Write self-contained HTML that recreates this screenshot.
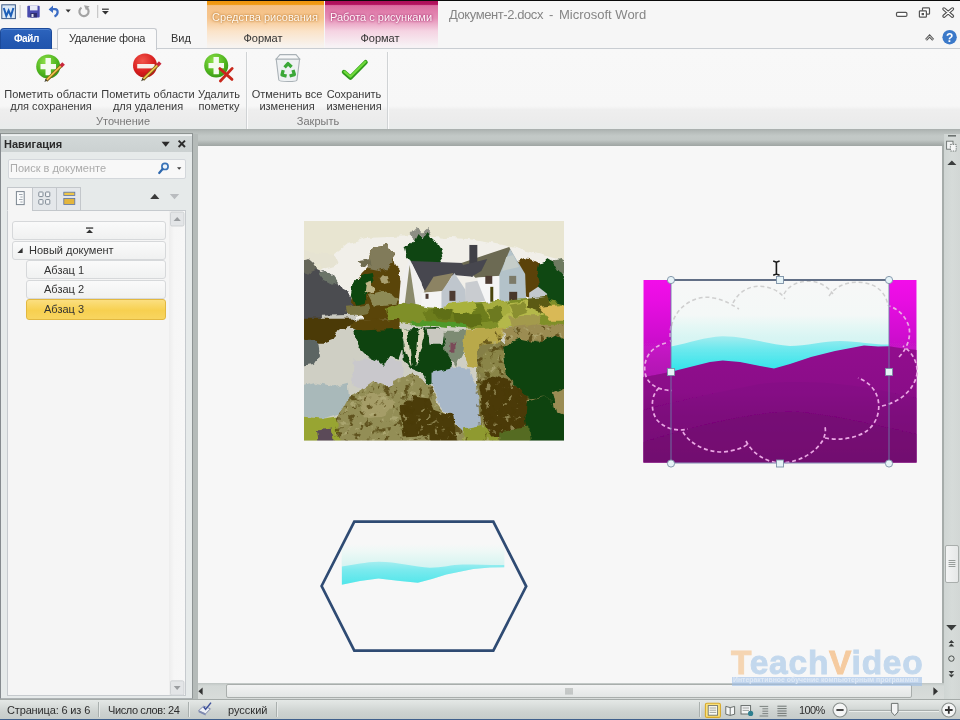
<!DOCTYPE html>
<html lang="ru">
<head>
<meta charset="utf-8">
<title>Документ-2.docx - Microsoft Word</title>
<style>
*{box-sizing:border-box;margin:0;padding:0}
html,body{width:960px;height:720px;overflow:hidden}
body{position:relative;background:#c6cacf;font-family:"Liberation Sans","DejaVu Sans",sans-serif;font-size:11px;color:#3a3a3a}
.abs{position:absolute}
.t{position:absolute;white-space:nowrap;line-height:1;will-change:transform}
.c{text-align:center;transform:translateX(-50%)}
/* title */
#topline{left:0;top:0;width:960px;height:1.4px;background:#0a0a0a}
#title{left:0;top:1px;width:960px;height:28px;background:#f6f6f6}
#tabsrow{left:0;top:29px;width:960px;height:20px;background:#f6f6f6;border-bottom:1px solid #c9cdd2}
#ribbon{left:0;top:49px;width:960px;height:81px;background:linear-gradient(#f8f8f8 0,#f7f7f7 57px,#eeeeee 61px,#ececec 70px,#e8eceb 100%)}
#filetab{left:0;top:27.5px;width:52px;height:21px;background:linear-gradient(#2d64bd,#2459b2 60%,#2155ad);border:1px solid #1c4a9a;border-bottom:none;box-shadow:inset 0 1px 0 #4f82d0;border-radius:4px 4px 0 0;color:#fff}
#acttab{left:57px;top:28px;width:100px;height:22px;background:#f9f9f9;border:1px solid #c6cacf;border-bottom:none;border-radius:3px 3px 0 0}
#ctx1{left:206.5px;top:1px;width:117px;height:47px;background:linear-gradient(#ef960f 0,#f09a14 3.4px,#f5c186 4.6px,#f6c58e 17px,#fbe3c8 30px,#f7f3ef 45px)}
#ctx2{left:325px;top:1px;width:112.5px;height:47px;background:linear-gradient(#ad0f5a 0,#b3125e 3.4px,#dc6ea2 4.6px,#e48db5 17px,#f5d3e2 30px,#f7f2f5 45px)}
.sep{position:absolute;width:1px;background:#d0d3d5;top:52px;height:77px;box-shadow:1px 0 0 #fbfbfb}
/* nav */
#nav{left:0;top:133px;width:193px;height:566px;background:#e6eaea;border:1px solid #8e9492;border-bottom-color:#aeb3b5;border-right-color:#8e9494;border-left:1px solid #858a8e}
#navhead{left:1px;top:134.5px;width:191px;height:17px;background:linear-gradient(#eef1f1 0,#eef1f1 1px,#d2d8d8 1.5px,#cbd1d1 100%)}
#navbody{left:7px;top:210px;width:179px;height:486px;background:#f5f5f5;border:1px solid #c6cace}
#navscroll{left:169px;top:211px;width:16px;height:484px;background:linear-gradient(90deg,#ededed 0,#f6f6f6 5px,#f7f7f7 100%)}
#search{left:8px;top:159px;width:178px;height:20px;background:#f8f8f8;border:1px solid #d3d7db;border-radius:2px}
.ntab{position:absolute;top:187px;height:24px;width:25px;background:#e4e7ea;border:1px solid #c3c7cb}
.item{position:absolute;height:19px;background:linear-gradient(#fafafa,#f0f1f1);border:1px solid #d6d8da;border-radius:3px}
/* doc */
#wstop{left:0;top:129px;width:960px;height:17px;background:linear-gradient(#a9afad 0,#b6bcba 3px,#c3c9c7 7px,#c1c7c5 11px,#aeb4b2 14px,#9fa5a3 17px)}
#wsleft{left:192px;top:134px;width:6px;height:565px;background:#b5bbb9}
#page{left:198px;top:146px;width:744px;height:537px;background:#f7f7f7}
#pager{left:942px;top:146px;width:2px;height:537px;background:#a6acaa}
#vscroll{left:944px;top:134px;width:16px;height:565px;background:linear-gradient(90deg,#cfd5d3,#d6dbd9 50%,#d2d7d5)}
#vthumb{left:944.5px;top:545px;width:14.5px;height:38px;background:linear-gradient(90deg,#f3f4f4,#e6e8e8);border:1px solid #a9aeac;border-radius:2px}
#hscroll{left:198px;top:683px;width:746px;height:16px;background:linear-gradient(#bfc5c3 0,#d3d8d6 3px,#d8dcda 100%)}
#hthumb{left:226px;top:684px;width:686px;height:14px;background:linear-gradient(#f2f3f3,#e3e6e5);border:1px solid #a9aeac;border-radius:2px}
#status{left:0;top:699px;width:960px;height:21px;background:linear-gradient(#e4e8e6 0,#dde1df 4px,#cdd2d0 60%,#c5cbc9);border-top:1px solid #a4aaa8}
#botline{left:0;top:718.8px;width:960px;height:1.2px;background:#3f5f8c}
.ssep{position:absolute;top:702px;height:15px;width:1px;background:#aab0ae;box-shadow:1px 0 0 #e6e9e8}
</style>
</head>
<body>
<div class="abs" id="title"></div>
<div class="abs" id="topline"></div>
<div class="abs" id="tabsrow"></div>
<div class="abs" id="ctx1"></div>
<div class="abs" id="ctx2"></div>
<div class="abs" id="ribbon"></div>
<div class="abs" id="filetab"></div>
<div class="abs" id="acttab"></div>

<div class="t" style="left:448.7px;top:8px;font-size:13px;letter-spacing:-0.42px;color:#858585">Документ-2.docx</div>
<div class="t" style="left:548.6px;top:8px;font-size:13px;color:#858585">-</div>
<div class="t" style="left:558.7px;top:8px;font-size:13px;color:#858585">Microsoft Word</div>
<div class="t" id="ftxt" style="left:13.8px;top:34.4px;font-size:10px;font-weight:bold;letter-spacing:-0.45px;color:#fff">Файл</div>
<div class="t" style="left:68.7px;top:33px;font-size:11px;letter-spacing:-0.3px;color:#333">Удаление фона</div>
<div class="t" style="left:171px;top:33px;font-size:11px;color:#333">Вид</div>
<div class="t c" style="left:265px;top:12px;font-size:11px;color:#fffaf2;text-shadow:0 0 2px #b9782e,0 0 3px #c98a44">Средства рисования</div>
<div class="t c" style="left:381px;top:12px;font-size:11px;color:#fff6fa;text-shadow:0 0 2px #a8306e,0 0 3px #b84a84">Работа с рисунками</div>
<div class="t c" style="left:263px;top:33px;font-size:11px;color:#333">Формат</div>
<div class="t c" style="left:380px;top:33px;font-size:11px;color:#333">Формат</div>

<div class="t c" style="left:51px;top:89px">Пометить области</div>
<div class="t c" style="left:51px;top:101px">для сохранения</div>
<div class="t c" style="left:148px;top:89px">Пометить области</div>
<div class="t c" style="left:148px;top:101px">для удаления</div>
<div class="t c" style="left:219px;top:89px">Удалить</div>
<div class="t c" style="left:219px;top:101px">пометку</div>
<div class="t c" style="left:287px;top:89px">Отменить все</div>
<div class="t c" style="left:287px;top:101px">изменения</div>
<div class="t c" style="left:354px;top:89px">Сохранить</div>
<div class="t c" style="left:354px;top:101px">изменения</div>
<div class="t c" style="left:123px;top:116px;color:#777">Уточнение</div>
<div class="t c" style="left:318px;top:116px;color:#777">Закрыть</div>
<div class="sep" style="left:246px"></div>
<div class="sep" style="left:387px"></div>

<svg class="abs" id="ribicons" style="left:0;top:0" width="960" height="133" viewBox="0 0 960 133">
<defs>
<radialGradient id="gr" cx="0.4" cy="0.3" r="0.8"><stop offset="0" stop-color="#8fe04a"/><stop offset="0.6" stop-color="#4fb51f"/><stop offset="1" stop-color="#2f8f14"/></radialGradient>
<radialGradient id="rd" cx="0.4" cy="0.3" r="0.8"><stop offset="0" stop-color="#f2554a"/><stop offset="0.6" stop-color="#d81f1f"/><stop offset="1" stop-color="#a81212"/></radialGradient>
<filter id="bi" x="-10%" y="-10%" width="120%" height="120%"><feGaussianBlur stdDeviation="0.45"/></filter>
</defs>
<g filter="url(#bi)">
<!-- word icon -->
<rect x="1.8" y="4.8" width="13.6" height="13.8" fill="#dbe9f7" stroke="#3c5a86" stroke-width="1"/>
<path d="M3.8 8 L6.3 15.8 L8.6 10.5 L10.9 15.8 L13.4 8" fill="none" stroke="#1f5fb8" stroke-width="2"/>
<rect x="19.6" y="5" width="1" height="13" fill="#c5c5c5"/>
<!-- save -->
<rect x="27.3" y="5.8" width="12.4" height="11.6" rx="1" fill="#4a4cae"/>
<rect x="30" y="5.8" width="7.5" height="4.6" fill="#e9ecf7"/>
<rect x="30.4" y="13" width="6.6" height="4.4" fill="#2d2f6e"/>
<rect x="31.5" y="14" width="2" height="3" fill="#e0e0ee"/>
<!-- undo -->
<path d="M50 9.2 L55 9.2 C58.6 9.4 58.6 14.5 54.5 16.4" fill="none" stroke="#3a6cc4" stroke-width="2.2"/>
<path d="M48.6 9.6 L53 5.6 L53 13 Z" fill="#3a6cc4"/>
<path d="M65.6 9.6 L70.8 9.6 L68.2 12.6 Z" fill="#333"/>
<!-- redo -->
<path d="M87 8 A4.6 4.6 0 1 1 81.5 7.6" fill="none" stroke="#a3a3a3" stroke-width="2.2"/>
<path d="M84 5.2 L89.6 6.2 L86 10.2 Z" fill="#a3a3a3"/>
<rect x="97.2" y="5" width="1" height="13" fill="#bdbdbd"/>
<rect x="102" y="8.6" width="6.8" height="1.2" fill="#333"/>
<path d="M102 11 L108.8 11 L105.4 14.6 Z" fill="#333"/>
<!-- window controls -->
<rect x="896.5" y="12.4" width="10.4" height="4" rx="1.2" fill="#fff" stroke="#555" stroke-width="1.2"/>
<rect x="922.5" y="7.8" width="7" height="6.4" rx="0.8" fill="#fff" stroke="#555" stroke-width="1.2"/>
<rect x="919.4" y="10.8" width="7" height="6.4" rx="0.8" fill="#fff" stroke="#555" stroke-width="1.2"/>
<rect x="921.6" y="13" width="2.4" height="2.2" fill="#555"/>
<path d="M944 9 L952.4 16.2 M952.4 9 L944 16.2" stroke="#505050" stroke-width="3.5" stroke-linecap="round"/>
<path d="M944 9 L952.4 16.2 M952.4 9 L944 16.2" stroke="#fff" stroke-width="1.2" stroke-linecap="round"/>
<path d="M926 39.8 L929.6 36 L933.2 39.8" fill="none" stroke="#555" stroke-width="2.6" stroke-linejoin="miter"/>
<path d="M926 39.8 L929.6 36 L933.2 39.8" fill="none" stroke="#fff" stroke-width="0.8"/>
<circle cx="949.6" cy="37.2" r="7.2" fill="#3b79c9"/>
<!-- icon 1 -->
<circle cx="48.2" cy="66.6" r="12" fill="url(#gr)"/>
<path d="M40.5 66.6 L56 66.6 M48.2 58 L48.2 75.2" stroke="#f4fbef" stroke-width="5.4"/>
<path d="M46.2 80.6 L61.6 65.4" stroke="#7a5a14" stroke-width="3.4"/>
<path d="M46.4 80.2 L61.2 65.6" stroke="#eec24a" stroke-width="1.8"/>
<path d="M60.8 66.2 L63.6 63.4" stroke="#c8283a" stroke-width="3.6"/>
<path d="M44.4 82 L47.6 80.6 L45.8 78.8 Z" fill="#443"/>
<!-- icon 2 -->
<circle cx="145" cy="65.6" r="12" fill="url(#rd)"/>
<path d="M137.2 66.2 L154.6 66.2" stroke="#f8efe9" stroke-width="4.4"/>
<path d="M143 79.6 L158.2 64.6" stroke="#7a5a14" stroke-width="3.4"/>
<path d="M143.2 79.2 L157.8 64.8" stroke="#eec24a" stroke-width="1.8"/>
<path d="M157.4 65.4 L160.2 62.6" stroke="#c8283a" stroke-width="3.6"/>
<path d="M141 81.2 L144.4 79.8 L142.6 78 Z" fill="#443"/>
<!-- icon 3 -->
<circle cx="216.2" cy="65.6" r="12" fill="url(#gr)"/>
<path d="M208.5 65.6 L224 65.6 M216.2 57 L216.2 74.2" stroke="#f4fbef" stroke-width="5.4"/>
<path d="M219.8 68.6 L232 79.4 M232.2 68.4 L220.4 81" stroke="#c8281c" stroke-width="2.8" stroke-linecap="round"/>
<!-- recycle bin -->
<path d="M276.2 59 L299.6 59 L297 80 C297 82 279 82 278.8 80 Z" fill="#eef1f3" stroke="#a9b1b6" stroke-width="1.1"/>
<path d="M276.2 59 L280 54.6 L296 54.6 L299.6 59 Z" fill="#f7f8f9" stroke="#a9b1b6" stroke-width="1.1"/>
<g fill="none" stroke="#3aa838" stroke-width="3.3" stroke-linejoin="round"><path d="M284.6 67.4 L288 63.6 L291.6 67"/><path d="M293 70 L294.4 74.6 L289.6 76"/><path d="M286.6 76.2 L282 75 L283.2 70.2"/></g>
<!-- checkmark -->
<path d="M344 72 L350.4 77.6 L365.6 62.2" fill="none" stroke="#2f9a1c" stroke-width="4.4" stroke-linecap="round" stroke-linejoin="round"/>
<path d="M344.4 71.6 L350.4 76.6 L365.4 61.8" fill="none" stroke="#6fda3a" stroke-width="2.2" stroke-linecap="round" stroke-linejoin="round"/>
</g>
<text x="949.6" y="41.6" text-anchor="middle" font-family="Liberation Sans, sans-serif" font-weight="bold" font-size="12" fill="#fff">?</text>
</svg>

<div class="abs" id="wstop"></div>
<div class="abs" id="wsleft"></div>
<div class="abs" id="nav"></div>
<div class="abs" id="navhead"></div>
<div class="t" style="left:4px;top:139px;font-weight:bold;color:#2a2a2a">Навигация</div>
<div class="abs" id="search"></div>
<div class="t" style="left:10px;top:163px;color:#ababab">Поиск в документе</div>
<div class="abs" id="navbody"></div>
<div class="abs" id="navscroll"></div>
<div class="ntab" style="left:7px;width:26px;background:#f5f5f5;border-bottom-color:#f5f5f5"></div>
<div class="ntab" style="left:32px"></div>
<div class="ntab" style="left:56px"></div>
<div class="item" style="left:12px;top:221px;width:154px"></div>
<div class="item" style="left:12px;top:241px;width:154px"></div>
<div class="t" style="left:29px;top:245px;color:#333">Новый документ</div>
<div class="item" style="left:26px;top:260px;width:140px"></div>
<div class="t" style="left:44px;top:265px;color:#333">Абзац 1</div>
<div class="item" style="left:26px;top:280px;width:140px"></div>
<div class="t" style="left:44px;top:284px;color:#333">Абзац 2</div>
<div class="item" style="left:26px;top:299px;width:140px;height:21px;background:linear-gradient(#fbdf80,#f7d050 55%,#f8d560);border-color:#e2b840"></div>
<div class="t" style="left:44px;top:304px;color:#333">Абзац 3</div>
<svg class="abs" id="navicons" style="left:0;top:133px" width="196" height="567" viewBox="0 133 196 567">
<g filter="url(#bi)">
<path d="M161.6 141.8 L169.8 141.8 L165.7 146.8 Z" fill="#2b2b2b"/>
<path d="M178.6 140.6 L185 147 M185 140.6 L178.6 147" stroke="#2b2b2b" stroke-width="1.9"/>
<!-- magnifier -->
<circle cx="165" cy="166.4" r="3.1" fill="#eef5fb" stroke="#3873b8" stroke-width="1.7"/>
<path d="M162.6 169 L159.2 173" stroke="#2f68ae" stroke-width="2.2" stroke-linecap="round"/>
<path d="M177 167.2 L181.4 167.2 L179.2 169.8 Z" fill="#444"/>
<!-- tab icons -->
<rect x="16.4" y="191.6" width="7.8" height="13" fill="#fafbfc" stroke="#7b8590" stroke-width="1"/>
<path d="M19 194.5 L22.6 194.5 M20.4 197 L22.6 197 M19 199.5 L22.6 199.5 M20.4 202 L22.6 202" stroke="#8a939c" stroke-width="0.8"/>
<g fill="#f4f6f8" stroke="#7f8994" stroke-width="1"><rect x="38.8" y="192" width="4.2" height="4.6" rx="0.6"/><rect x="45.6" y="192" width="4.2" height="4.6" rx="0.6"/><rect x="38.8" y="199.6" width="4.2" height="4.6" rx="0.6"/><rect x="45.6" y="199.6" width="4.2" height="4.6" rx="0.6"/></g>
<rect x="63.8" y="192.2" width="11" height="3.2" fill="#eec64a" stroke="#5a73a8" stroke-width="0.8"/>
<rect x="63.8" y="198.4" width="11" height="6" fill="#e3b53e" stroke="#5a73a8" stroke-width="0.8"/>
<path d="M150.2 199 L159.4 199 L154.8 193.8 Z" fill="#3a3a3a"/>
<path d="M169.8 194 L179.2 194 L174.5 199.2 Z" fill="#b9bcbf"/>
<!-- list scrollbar buttons -->
<rect x="170.5" y="212" width="13.4" height="14" rx="1.5" fill="#e3e5e7" stroke="#c8cbce" stroke-width="0.8"/>
<path d="M173.6 221 L180.8 221 L177.2 217 Z" fill="#9a9da0"/>
<rect x="170.5" y="680.8" width="13.4" height="14.4" rx="1.5" fill="#e3e5e7" stroke="#c8cbce" stroke-width="0.8"/>
<path d="M173.8 686 L180.6 686 L177.2 690 Z" fill="#9a9da0"/>
<!-- collapse icon -->
<rect x="86" y="227.4" width="7.2" height="1.3" fill="#333"/>
<path d="M86.2 233 L93 233 L89.6 229.4 Z" fill="#333"/>
<path d="M17.4 253 L22.6 253 L22.6 247.8 Z" fill="#333"/>
</g>
</svg>

<div class="abs" id="page"></div>
<div class="abs" id="pager"></div>
<svg class="abs" id="pic1" style="left:304.4px;top:221.1px" width="260" height="219.5" viewBox="0 0 261 220" preserveAspectRatio="none">
<defs><filter id="b1" x="-5%" y="-5%" width="110%" height="110%" color-interpolation-filters="sRGB"><feTurbulence type="fractalNoise" baseFrequency="0.11" numOctaves="2" seed="7" result="n"/><feDisplacementMap in="SourceGraphic" in2="n" scale="7" xChannelSelector="R" yChannelSelector="G"/><feGaussianBlur stdDeviation="0.6"/></filter><filter id="b1h" x="-5%" y="-5%" width="110%" height="110%"><feGaussianBlur stdDeviation="0.55"/></filter><filter id="sp1" x="0" y="0" width="100%" height="100%" color-interpolation-filters="sRGB"><feTurbulence type="fractalNoise" baseFrequency="0.16" numOctaves="2" seed="3"/><feColorMatrix type="matrix" values="0 0 0 0 0.29  0 0 0 0 0.23  0 0 0 0 0.03  9 0 0 0 -5.2"/><feGaussianBlur stdDeviation="0.5"/></filter>
<filter id="sp2" x="0" y="0" width="100%" height="100%" color-interpolation-filters="sRGB"><feTurbulence type="fractalNoise" baseFrequency="0.17" numOctaves="2" seed="11"/><feColorMatrix type="matrix" values="0 0 0 0 0.72  0 0 0 0 0.70  0 0 0 0 0.50  0 9 0 0 -5.6"/><feGaussianBlur stdDeviation="0.5"/></filter>
<clipPath id="fol"><path d="M34 196 L44 178 L56 170 L70 160 L84 166 L96 158 L110 152 L126 164 L134 182 L146 198 L160 212 L170 223 L30 223 Z M176 124 L199 108 L264 104 L264 223 L176 223 L172 170 Z"/></clipPath>
<clipPath id="cp1"><rect x="0" y="0" width="261" height="220"/></clipPath></defs>
<g clip-path="url(#cp1)"><g filter="url(#b1)">
<rect x="-3" y="-3" width="267" height="226" fill="#e8e5d1"/>
<!-- clouds -->
<path d="M30 34 L45 22 L62 17 L110 15 L165 18 L200 24 L235 33 L264 40 L264 100 L-3 100 L-3 62 L10 55 L25 45 Z" fill="#f1efe9"/>
<path d="M-3 30 L30 34 L34 44 L20 48 L10 40 L-3 40 Z" fill="#e6e3d2"/>
<!-- water base -->
<rect x="-3" y="98" width="267" height="125" fill="#cfcfc4"/>
<!-- left slate tree -->
<path d="M-3 40 L2 38 L6 37.5 L10 41 L13 49 L17 51 L22 50 L28 54 L33 61 L38 69 L44 72 L48 76 L52 84 L50 90 L52 98 L50 104 L-3 104 Z" fill="#4b4c50"/>
<path d="M14 52 L22 50 L30 56 L34 62 L28 64 L20 60 Z" fill="#6b7468"/>
<!-- middle tree -->
<path d="M66 34 L72 26 L84 24 L89 32 L92 44 L96 48 L98 60 L96 98 L60 100 L56 88 L48 84 L50 64 L58 52 L64 46 Z" fill="#5a4509"/>
<path d="M66 34 L72 26 L84 24 L89 32 L90 42 L84 48 L74 50 L64 48 Z" fill="#817b5a"/>
<path d="M50 62 L58 54 L68 52 L70 60 L64 70 L62 82 L52 84 L48 74 Z" fill="#0d470f"/>
<path d="M64 74 L80 70 L94 76 L92 84 L70 86 Z" fill="#8d8a55"/>
<path d="M42 86 L64 84 L66 92 L44 96 Z" fill="#7a7440"/>
<path d="M54 40 L66 38 L68 44 L56 45 Z" fill="#6f6c50"/>
<path d="M-3 40 L2 38 L6 37.5 L10 41 L13 49 L6 52 L-3 50 Z" fill="#66675a"/>
<path d="M62 62 L68 60 L71 68 L66 73 L61 70 Z" fill="#bdb587"/>
<path d="M76 56 L83 55 L85 62 L78 64 Z" fill="#a9a070"/>
<path d="M17 95 L52 94 L52 98 L17 98.5 Z" fill="#c9c9c0"/>
<path d="M106 14 L112 7 L118 12 L124 6 L128 14 L120 17 L110 18 Z" fill="#8d8e84"/>
<!-- dark green tree behind house -->
<path d="M100 26 L106 24 L110 20 L114 12 L119 18 L124 10 L128 18 L134 22 L138 28 L140 36 L136 42 L108 42 L102 34 Z" fill="#0f4512"/>
<!-- right trees -->
<path d="M214 40 L222 36 L230 38 L238 42 L238 74 L222 76 Z" fill="#5b4209"/>
<path d="M236 42 L244 38 L254 44 L260 54 L264 60 L264 84 L248 82 L238 74 L234 56 Z" fill="#0f4812"/>
<path d="M248 40 L258 38 L264 42 L264 56 L254 50 Z" fill="#6e7a60"/>
</g><g filter="url(#b1h)">
<!-- house: dark slate roof -->
<path d="M107 40 L160 42 L170 56 L150 54 L128 66 L122 72 Z" fill="#47474f"/>
<!-- left gable -->
<path d="M95 84 L97 60 L106 38 L118 62 L122 84 Z" fill="#f0efee"/>
<path d="M101 84 L106 44 L112 84 Z" fill="#8b8a6c"/>
<!-- thatched small roof -->
<path d="M120 72 L130 56 L150 52 L140 70 Z" fill="#8c8364"/>
<!-- small house front -->
<path d="M118 72 L138 71 L138 88 L118 88 Z" fill="#f4f4f4"/>
<path d="M138 71 L151 52 L162 69 L163 84 L138 88 Z" fill="#bfc6cd"/>
<rect x="146" y="70" width="6" height="10" fill="#4d3b32"/>
<rect x="122" y="73" width="3" height="5" fill="#4d3b32"/>
<!-- big roof -->
<path d="M158 42 L206 26 L220 53 L172 57 Z" fill="#6c6b52"/>
<rect x="166" y="24" width="8" height="26" fill="#3f3f46"/>
<path d="M160 44 L184 38 L178 50 L168 56 Z" fill="#47474f"/>
<!-- front gable big -->
<path d="M207 28 L222 53 L223 79 L196 81 L196 54 Z" fill="#b3c2c9"/>
<path d="M203 36 L210 34 L216 46 L199 50 Z" fill="#c5cdc9"/>
<rect x="206" y="55" width="7" height="8" fill="#7c7a68"/>
<rect x="206" y="71" width="8" height="9" fill="#4a382c"/>
<!-- white wall -->
<path d="M174 57 L196 55 L196 81 L174 82 Z" fill="#f5f5f5"/>
<rect x="182" y="55" width="7" height="8" fill="#4d3b32"/>
<path d="M162 62 L174 60 L182 80 L162 84 Z" fill="#c9ccd0"/>
<rect x="187" y="66" width="3" height="15" fill="#4a4510"/>
<!-- shed -->
<path d="M226 72 L235 66 L244 73 L244 78 L226 78 Z" fill="#c3c9cd"/>
</g><g filter="url(#b1)">
<!-- bank foliage -->
<path d="M82 88 L100 82 L120 86 L140 88 L165 82 L200 80 L225 78 L245 80 L264 84 L264 104 L180 108 L120 104 L86 100 Z" fill="#7f8f28"/>
<path d="M120 90 L150 84 L180 84 L190 100 L150 106 L124 104 Z" fill="#6d7d1c"/>
<path d="M190 84 L230 80 L240 92 L220 104 L196 108 Z" fill="#b4b84a"/>
<path d="M224 78 L244 76 L248 84 L236 92 L224 88 Z" fill="#5b5a14"/>
<path d="M236 86 L264 84 L264 100 L246 100 Z" fill="#d9b956"/>
<path d="M140 84 L168 80 L176 88 L160 94 L142 92 Z" fill="#a9b23c"/>
<path d="M178 82 L204 80 L208 92 L186 98 Z" fill="#a6ad3e"/>
<path d="M150 94 L176 92 L180 104 L152 106 Z" fill="#5f6f16"/>
<path d="M206 96 L236 94 L240 108 L210 112 Z" fill="#a39a4c"/>
<path d="M108 100 L136 101 L163 103.5 L163 107.5 L136 105.5 L108 104.5 Z" fill="#4f9a2a"/>
<path d="M117 109 L138 109 L138 125 L118 125 Z" fill="#c9c9ba"/>
<path d="M128 90 L140 86 L150 90 L146 98 L132 98 Z" fill="#5f6f16"/>
<path d="M184 90 L196 86 L200 96 L190 102 Z" fill="#6d7a20"/>
<path d="M206 84 L220 82 L224 92 L212 96 Z" fill="#8a8f30"/>
<!-- water: brown left -->
<path d="M-3 98 L52 98 L50 104 L36 108 L30 118 L20 122 L-3 122 Z" fill="#4b3a07"/>
<path d="M-3 120 L14 120 L16 134 L10 144 L-3 146 Z" fill="#5c6563"/>
<path d="M50 100 L96 98 L96 112 L60 112 L46 108 Z" fill="#5a4509"/>
<path d="M50 140 L70 136 L98 140 L100 160 L84 168 L60 170 L48 164 Z" fill="#c9c8cc"/>
<!-- lower water bluish -->
<path d="M-3 166 L12 162 L30 166 L44 162 L46 190 L20 198 L-3 196 Z" fill="#a9b9ba"/>
<!-- dark green reflections -->
<path d="M50 110 L98 108 L100 126 L96 138 L86 136 L80 146 L72 138 L62 134 L54 126 Z" fill="#0e430f"/>
<path d="M100 108 L134 106 L146 116 L150 128 L146 152 L134 160 L126 164 L118 152 L108 148 L100 138 Z" fill="#0e430f"/>
<path d="M98 108 L104 108 L108 146 L102 132 Z" fill="#d9d6bd"/>
<path d="M114 108 L122 108 L118 130 L112 146 Z" fill="#d9d6bd"/>
<!-- house reflection -->
<path d="M124 108 L140 108 L138 124 L126 124 Z" fill="#c9c8c0"/>
<path d="M139 110 L163 110 L162 128 L152 146 L142 130 Z" fill="#7d8b73"/>
<rect x="146" y="122" width="6" height="10" fill="#7a4a58"/>
<path d="M163 108 L200 106 L198 130 L186 132 L176 148 L164 146 L160 132 Z" fill="#b9a94a"/>
<path d="M199 108 L230 104 L264 104 L264 124 L230 122 L204 126 Z" fill="#9b8c52"/>
<path d="M176 124 L264 118 L264 223 L176 223 L172 170 Z" fill="#857f47"/>
<!-- water light blue right -->
<path d="M128 152 L150 146 L166 148 L172 162 L176 182 L178 208 L160 212 L146 196 L134 180 L128 166 Z" fill="#a7b7c8"/>
<!-- khaki foliage bottom -->
<path d="M34 196 L44 178 L56 170 L70 160 L84 166 L96 158 L110 152 L126 164 L134 182 L146 198 L160 212 L170 223 L30 223 Z" fill="#938e56"/>
<path d="M56 176 L80 172 L92 182 L80 196 L60 198 Z" fill="#a59d68"/>
<path d="M96 186 L110 176 L126 178 L134 196 L128 214 L100 216 Z" fill="#4b3c09"/>
<path d="M-3 196 L20 198 L34 196 L36 223 L-3 223 Z" fill="#98a532"/>
<path d="M12 210 L28 208 L30 223 L14 223 Z" fill="#5b4a58"/>
<path d="M126 188 L150 196 L154 223 L126 223 Z" fill="#4b3c09"/>
<path d="M160 208 L180 204 L200 212 L200 223 L160 223 Z" fill="#8f9a30"/>
<!-- right bottom -->
<path d="M176 164 L188 156 L204 160 L222 170 L226 200 L216 216 L190 216 L180 200 Z" fill="#4b3a08"/>
<path d="M180 130 L200 128 L206 150 L190 158 L178 152 Z" fill="#8a8548"/>
<g clip-path="url(#fol)"><rect x="0" y="0" width="261" height="220" filter="url(#sp1)" opacity="0.7"/><rect x="0" y="0" width="261" height="220" filter="url(#sp2)" opacity="0.6"/></g>
<path d="M200 126 L216 118 L236 122 L250 114 L264 120 L264 180 L252 184 L240 176 L226 178 L214 166 L204 156 Z" fill="#0e430f"/>
<path d="M224 180 L240 176 L252 184 L264 180 L264 223 L226 223 L222 200 Z" fill="#0e430f"/>
<path d="M196 212 L226 206 L228 223 L196 223 Z" fill="#556b22"/>
<path d="M250 172 L264 166 L264 196 L254 192 Z" fill="#9a8c54"/>
</g></g>
</svg>

<svg class="abs" id="pic2" style="left:630px;top:255px" width="300" height="225" viewBox="630 255 300 225">
<defs>
<linearGradient id="mg" x1="0" y1="280" x2="0" y2="380" gradientUnits="userSpaceOnUse"><stop offset="0" stop-color="#f20fea"/><stop offset="0.2" stop-color="#e80ee2"/><stop offset="0.55" stop-color="#d010d0"/><stop offset="0.8" stop-color="#bc14bc"/><stop offset="1" stop-color="#ae16b0"/></linearGradient>
<linearGradient id="pg" x1="0" y1="345" x2="0" y2="463" gradientUnits="userSpaceOnUse"><stop offset="0" stop-color="#920a8e"/><stop offset="0.4" stop-color="#8a0888"/><stop offset="0.6" stop-color="#7d077a"/><stop offset="1" stop-color="#70086c"/></linearGradient>
<linearGradient id="sky" x1="0" y1="280" x2="0" y2="372" gradientUnits="userSpaceOnUse"><stop offset="0" stop-color="#f7f7f7"/><stop offset="0.38" stop-color="#f4f8f7"/><stop offset="0.5" stop-color="#e5f7f5"/><stop offset="0.62" stop-color="#d8f5f3"/><stop offset="1" stop-color="#c9f2f1"/></linearGradient>
<linearGradient id="far" x1="0" y1="336" x2="0" y2="372" gradientUnits="userSpaceOnUse"><stop offset="0" stop-color="#a4ecef"/><stop offset="0.35" stop-color="#6ee9ee"/><stop offset="1" stop-color="#2fe4ea"/></linearGradient>
<filter id="b2" x="-5%" y="-5%" width="110%" height="110%"><feGaussianBlur stdDeviation="0.6"/></filter>
<clipPath id="selc"><rect x="671" y="280" width="218" height="183"/></clipPath>
</defs>
<g filter="url(#b2)">
<rect x="643.5" y="280" width="273" height="182.5" fill="url(#mg)"/>
<g clip-path="url(#selc)">
<rect x="671" y="280" width="218" height="100" fill="url(#sky)"/>
<path d="M671 346.5 C690 343 705 337 722 336.3 C745 336 770 345 790 346 C805 346 825 341 840 341 C860 341.5 875 345 889 344.5 L889 380 L671 380 Z" fill="url(#far)"/>
</g>
<path d="M643.5 377 L655 375 L671 371.7 L690 367 L710 362 L722.7 360.4 L740 362 L760 366 L774 368.6 L790 364 L811 357 L835 351 L864 345.5 L878 346.5 L889 346.2 L900 348 L916.5 350 L916.5 462.5 L643.5 462.5 Z" fill="url(#pg)"/>
<path d="M643.5 410 C680 400 720 392 760 384 C800 380 840 382 889 392 L916.5 398 L916.5 462.5 L643.5 462.5 Z" fill="#7f0880" opacity="0.38"/>
<path d="M643.5 442 C700 424 760 410 800 412 C840 416 870 424 916.5 434 L916.5 462.5 L643.5 462.5 Z" fill="#6e086c" opacity="0.45"/>
</g>
<!-- cloud dashed outline -->
<g fill="none" stroke-width="1.5" stroke-dasharray="4 2.8" stroke-linecap="butt">
<g stroke="#cfcfcf">
<path d="M671.5 326 C676 306 696 294 714 298 C725 300 734 306 739 309"/>
<path d="M733 303 C740 289 754 284 766 287 C776 289 782 294 785 299"/>
<path d="M784 294 C790 283 802 280.5 813 281.5 C822 283 829 288 833 294"/>
<path d="M829 296 C836 285 850 281 862 282.5 C876 284 886 292 888 306"/>
</g>
<g stroke="#eaa8e4" stroke-width="1.7">
<path d="M671 326 C670 333 670 338 671 342"/>
<path d="M666 343 C652 346 643 358 645 372 C646 382 655 390 672 390.5"/>
<path d="M659 388 C651 395 650 410 657 420 C664 428 676 432 688 429"/>
<path d="M683 432 C690 444 706 452 722 452 C734 451 743 448 748 444"/>
<path d="M746 441 C752 453 766 463 782 463 C800 462 816 452 823 440 C825 435 826 431 825 427"/>
<path d="M825 438 C840 441 858 438 868 430 C880 420 882 402 874 390 C870 384 864 380 858 378"/>
<path d="M882 406 C900 402 914 390 917 374 C918 362 912 352 903 346"/>
<path d="M899 357 C908 348 912 334 908 324 C904 314 896 308 889 306"/>
</g>
</g>
<!-- selection frame -->
<rect x="671" y="280" width="218" height="183" fill="none" stroke="#6f7aa6" stroke-width="0.9"/>
<line x1="671" y1="280" x2="889" y2="280" stroke="#44546c" stroke-width="1.4"/>
<g fill="#e6f3f7" stroke="#7b90a5" stroke-width="0.9">
<circle cx="671" cy="280" r="3.6"/><circle cx="889" cy="280" r="3.6"/><circle cx="671" cy="463.5" r="3.6"/><circle cx="889" cy="463.5" r="3.6"/>
<rect x="776.5" y="276.5" width="7" height="7"/><rect x="776.5" y="460" width="7" height="7"/>
<rect x="667.5" y="368.5" width="7" height="7"/><rect x="885.5" y="368.5" width="7" height="7"/>
</g>
<!-- I-beam cursor -->
<g stroke="#1a1a1a" stroke-width="1.6" fill="none"><path d="M773.2 261 L776.4 262.2 L779.6 261 M776.4 262.2 L776.4 274 M773.2 275.2 L776.4 274 L779.6 275.2"/></g>
</svg>

<svg class="abs" id="pic3" style="left:310px;top:510px" width="230" height="150" viewBox="310 510 230 150">
<defs>
<linearGradient id="sky3" x1="0" y1="544" x2="0" y2="568" gradientUnits="userSpaceOnUse"><stop offset="0" stop-color="#f7f7f7"/><stop offset="0.3" stop-color="#eef8f6"/><stop offset="0.65" stop-color="#e0f6f3"/><stop offset="1" stop-color="#d2f3f1"/></linearGradient>
<linearGradient id="far3" x1="0" y1="561" x2="0" y2="585" gradientUnits="userSpaceOnUse"><stop offset="0" stop-color="#a8eef0"/><stop offset="0.35" stop-color="#7ceaee"/><stop offset="1" stop-color="#4fe6ea"/></linearGradient>
<clipPath id="c3"><path d="M341.7 540 L504.4 540 L504.4 567.2 L490 567.6 L473.3 569 L446.3 574.5 L432 579 L417.8 582.8 L400 581 L378.5 578.5 L360 581 L341.7 584.8 Z"/></clipPath>
<filter id="b3" x="-5%" y="-20%" width="110%" height="140%"><feGaussianBlur stdDeviation="0.6"/></filter>
</defs>
<g filter="url(#b3)"><g clip-path="url(#c3)">
<rect x="341" y="540" width="164" height="46" fill="url(#sky3)"/>
<path d="M341.7 566.4 C355 565 365 562 378.5 561.8 C395 561.6 415 567 430 567.7 C442 567.7 452 564.7 462.5 564.5 C478 564.5 492 565.2 504.5 565 L504.5 590 L341.7 590 Z" fill="url(#far3)"/>
</g></g>
<path d="M321.6 586 L354.3 521.6 L493.3 521.6 L526.2 586.3 L493.3 650.6 L354.3 650.6 Z" fill="none" stroke="#2f4b73" stroke-width="2.7" stroke-linejoin="miter"/>
</svg>

<div class="abs" id="vscroll"></div>
<div class="abs" id="vthumb"></div>
<div class="abs" id="hscroll"></div>
<div class="abs" id="hthumb"></div>
<div class="abs" id="status"></div>
<div class="abs" id="botline"></div>
<div class="ssep" style="left:98px"></div>
<div class="ssep" style="left:188px"></div>
<div class="ssep" style="left:276px"></div>
<div class="ssep" style="left:699px"></div>
<div class="t" style="left:7px;top:705px;letter-spacing:-0.15px;color:#2e2e2e">Страница: 6 из 6</div>
<div class="t" style="left:108px;top:705px;letter-spacing:-0.4px;color:#2e2e2e">Число слов: 24</div>
<div class="t" style="left:228px;top:705px;color:#2e2e2e">русский</div>
<div class="t" style="left:799px;top:705px;font-size:11px;letter-spacing:-0.6px;color:#2e2e2e">100%</div>
<svg class="abs" id="docicons" style="left:192px;top:133px" width="768" height="587" viewBox="192 133 768 587">
<g filter="url(#bi)">
<!-- split handle & ruler icon -->
<rect x="948" y="135" width="8" height="1.6" fill="#6d7371"/>
<rect x="946.6" y="141.2" width="6.4" height="8" fill="#f1f3f3" stroke="#6a706e" stroke-width="0.9"/>
<rect x="950.4" y="144.4" width="5.8" height="6.6" fill="#f6f7f7" stroke="#6a706e" stroke-width="0.9" stroke-dasharray="1.4 1"/>
<path d="M947.4 165 L956.4 165 L951.9 160.4 Z" fill="#3a3d3c"/>
<!-- thumb grip -->
<path d="M948.6 560.5 H955.4 M948.6 562.5 H955.4 M948.6 564.5 H955.4 M948.6 566.5 H955.4" stroke="#8d9391" stroke-width="0.9"/>
<path d="M946.2 625 L956.6 625 L951.4 630.4 Z" fill="#3a3d3c"/>
<path d="M948.6 643 L954.2 643 L951.4 640 Z M948.6 646.6 L954.2 646.6 L951.4 643.6 Z" fill="#3a3d3c"/>
<circle cx="951.4" cy="658.6" r="2.7" fill="none" stroke="#4a4e4c" stroke-width="1"/>
<path d="M948.6 671 L954.2 671 L951.4 674 Z M948.6 674.6 L954.2 674.6 L951.4 677.6 Z" fill="#3a3d3c"/>
<!-- hscroll arrows -->
<path d="M202.6 687.4 L202.6 695 L198.4 691.2 Z" fill="#333"/>
<path d="M933.4 687.2 L933.4 695.4 L938 691.3 Z" fill="#333"/>
<path d="M566 688 V694.6 M568 688 V694.6 M570 688 V694.6 M572 688 V694.6" stroke="#8d9391" stroke-width="0.8"/>
<!-- proofing icon -->
<path d="M198.6 710.6 L203.6 706.2 L210.4 708.8 L205.6 713.8 Z" fill="#eef1f6" stroke="#7a85a8" stroke-width="0.9"/>
<path d="M198.6 710.6 L205.6 713.8 L205.6 715.4 L198.6 712.2 Z" fill="#7f8ab0"/>
<path d="M203.6 706.8 L205.6 709.4 L211 702.6" fill="none" stroke="#3b4f9a" stroke-width="1.5"/>
<!-- view buttons -->
<rect x="705.4" y="703.2" width="15" height="14.2" rx="1.5" fill="#fbe27a" stroke="#d8a92a" stroke-width="1.1"/>
<rect x="708.2" y="705.6" width="9.4" height="9.6" fill="#fbfbf3" stroke="#6c706a" stroke-width="0.9"/>
<path d="M709.6 708 H716.2 M709.6 710.2 H716.2 M709.6 712.4 H716.2" stroke="#8a8e88" stroke-width="0.8"/>
<path d="M725.8 706.4 L730.2 707.6 L734.6 706.4 L734.6 714.2 L730.2 715.4 L725.8 714.2 Z M730.2 707.6 V715.4" fill="#f4f6f6" stroke="#5c6260" stroke-width="0.9"/>
<rect x="741" y="705.6" width="9.6" height="8.4" fill="#f2f4f5" stroke="#5c6260" stroke-width="0.9"/>
<path d="M742.6 708 H749 M742.6 710.4 H749" stroke="#8a8e8c" stroke-width="0.8"/>
<circle cx="750.6" cy="713.4" r="2.6" fill="#2f7f8f"/>
<path d="M759.6 706.4 H768.2 M762.4 708.8 H768.2 M762.4 711.2 H768.2 M762.4 713.6 H768.2 M759.6 716 H768.2" stroke="#7c8280" stroke-width="1"/>
<path d="M777.4 706.2 H786.6 M777.4 708.6 H786.6 M777.4 711 H786.6 M777.4 713.4 H786.6 M777.4 715.8 H786.6" stroke="#6f7573" stroke-width="1"/>
<!-- zoom slider -->
<circle cx="840" cy="710" r="7" fill="#f4f5f5" stroke="#8a908e" stroke-width="1.1"/>
<path d="M836.4 710 H843.6" stroke="#333" stroke-width="1.8"/>
<path d="M849 710.4 H939" stroke="#9aa09e" stroke-width="1"/>
<path d="M849 711.4 H939" stroke="#eef0ef" stroke-width="1"/>
<path d="M891.4 703.4 H898 V712 L894.7 715.6 L891.4 712 Z" fill="#f2f3f3" stroke="#6f7573" stroke-width="1"/>
<circle cx="948.8" cy="710" r="7" fill="#f4f5f5" stroke="#8a908e" stroke-width="1.1"/>
<path d="M945 710 H952.6 M948.8 706.2 V713.8" stroke="#333" stroke-width="1.8"/>
</g>
</svg>

<div class="t" id="wm" style="left:731px;top:646px;font-size:33.5px;font-weight:bold;letter-spacing:0.75px;color:#c3d8ed;-webkit-text-stroke:0.9px #c3d8ed;filter:blur(0.5px)"><span style="color:#f5d5b2;-webkit-text-stroke:0.9px #f5d5b2">T</span>each<span style="color:#f5cba0;-webkit-text-stroke:0.9px #f5cba0">V</span>ideo</div>
<div class="abs" style="left:731.5px;top:676.5px;width:190px;height:9px;background:rgba(160,192,232,0.62);filter:blur(0.5px)"></div>
<div class="t" style="left:733px;top:677px;font-size:6.9px;font-weight:bold;letter-spacing:0px;color:#dfe9f5;filter:blur(0.45px)">Интерактивное обучение компьютерным программам</div>

</body>
</html>
